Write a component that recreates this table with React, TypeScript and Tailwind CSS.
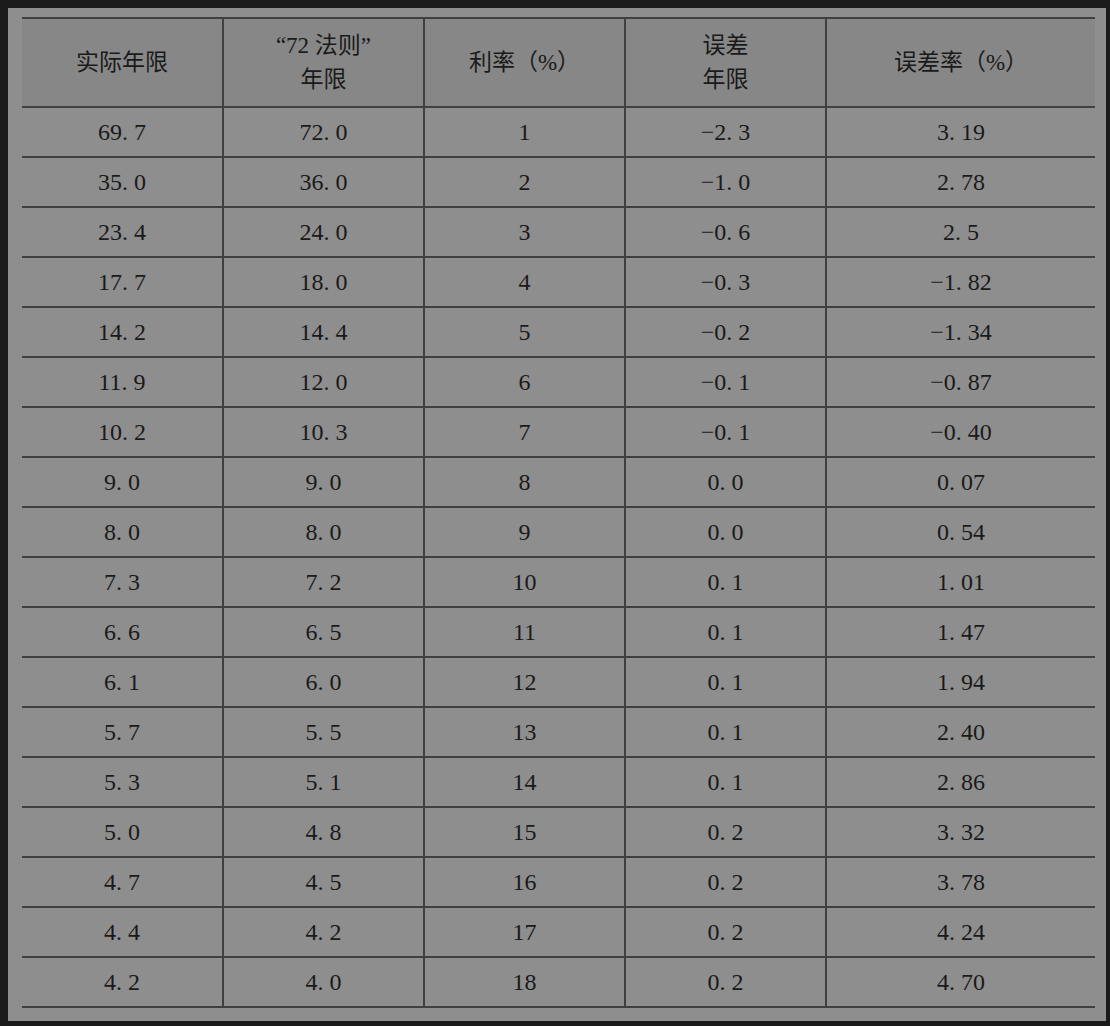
const rows: string[][] = [
  ["69. 7", "72. 0", "1", "−2. 3", "3. 19"],
  ["35. 0", "36. 0", "2", "−1. 0", "2. 78"],
  ["23. 4", "24. 0", "3", "−0. 6", "2. 5"],
  ["17. 7", "18. 0", "4", "−0. 3", "−1. 82"],
  ["14. 2", "14. 4", "5", "−0. 2", "−1. 34"],
  ["11. 9", "12. 0", "6", "−0. 1", "−0. 87"],
  ["10. 2", "10. 3", "7", "−0. 1", "−0. 40"],
  ["9. 0", "9. 0", "8", "0. 0", "0. 07"],
  ["8. 0", "8. 0", "9", "0. 0", "0. 54"],
  ["7. 3", "7. 2", "10", "0. 1", "1. 01"],
  ["6. 6", "6. 5", "11", "0. 1", "1. 47"],
  ["6. 1", "6. 0", "12", "0. 1", "1. 94"],
  ["5. 7", "5. 5", "13", "0. 1", "2. 40"],
  ["5. 3", "5. 1", "14", "0. 1", "2. 86"],
  ["5. 0", "4. 8", "15", "0. 2", "3. 32"],
  ["4. 7", "4. 5", "16", "0. 2", "3. 78"],
  ["4. 4", "4. 2", "17", "0. 2", "4. 24"],
  ["4. 2", "4. 0", "18", "0. 2", "4. 70"],
]

const headers: string[][] = [
  ["实际年限"],
  ["“72 法则”", "年限"],
  ["利率（%）"],
  ["误差", "年限"],
  ["误差率（%）"],
]

export default function App() {
  return (
    <div className="min-h-[1026px] w-[1110px] bg-[#1b1b1b] pt-[8px] pl-[8px]">
      <div
        className="w-[1098px] h-[1013px] bg-[#8e8e8e] pl-[14px] pt-[9px] text-[#1a1a1a]"
        style={{ fontFamily: '"Liberation Serif", "Noto Sans CJK SC", serif' }}
      >
        <div className="w-[1073px] border-t-2 border-[#404040] grid grid-cols-[202px_201px_201px_201px_268px]">
          {headers.map((h, i) => (
            <div
              key={i}
              className={
                "h-[89px] bg-[#878787] border-b-2 border-[#404040] flex flex-col items-center justify-center text-[23px] leading-[34px] " +
                (i < 4 ? "border-r-2" : "")
              }
            >
              {h.map((line, j) => (
                <span key={j}>{line}</span>
              ))}
            </div>
          ))}
          {rows.map((r, ri) =>
            r.map((c, ci) => (
              <div
                key={ri + "-" + ci}
                className={
                  "h-[50px] border-b-2 border-[#404040] flex items-center justify-center text-[24px] " +
                  (ci < 4 ? "border-r-2" : "")
                }
              >
                {c}
              </div>
            ))
          )}
        </div>
      </div>
    </div>
  )
}
